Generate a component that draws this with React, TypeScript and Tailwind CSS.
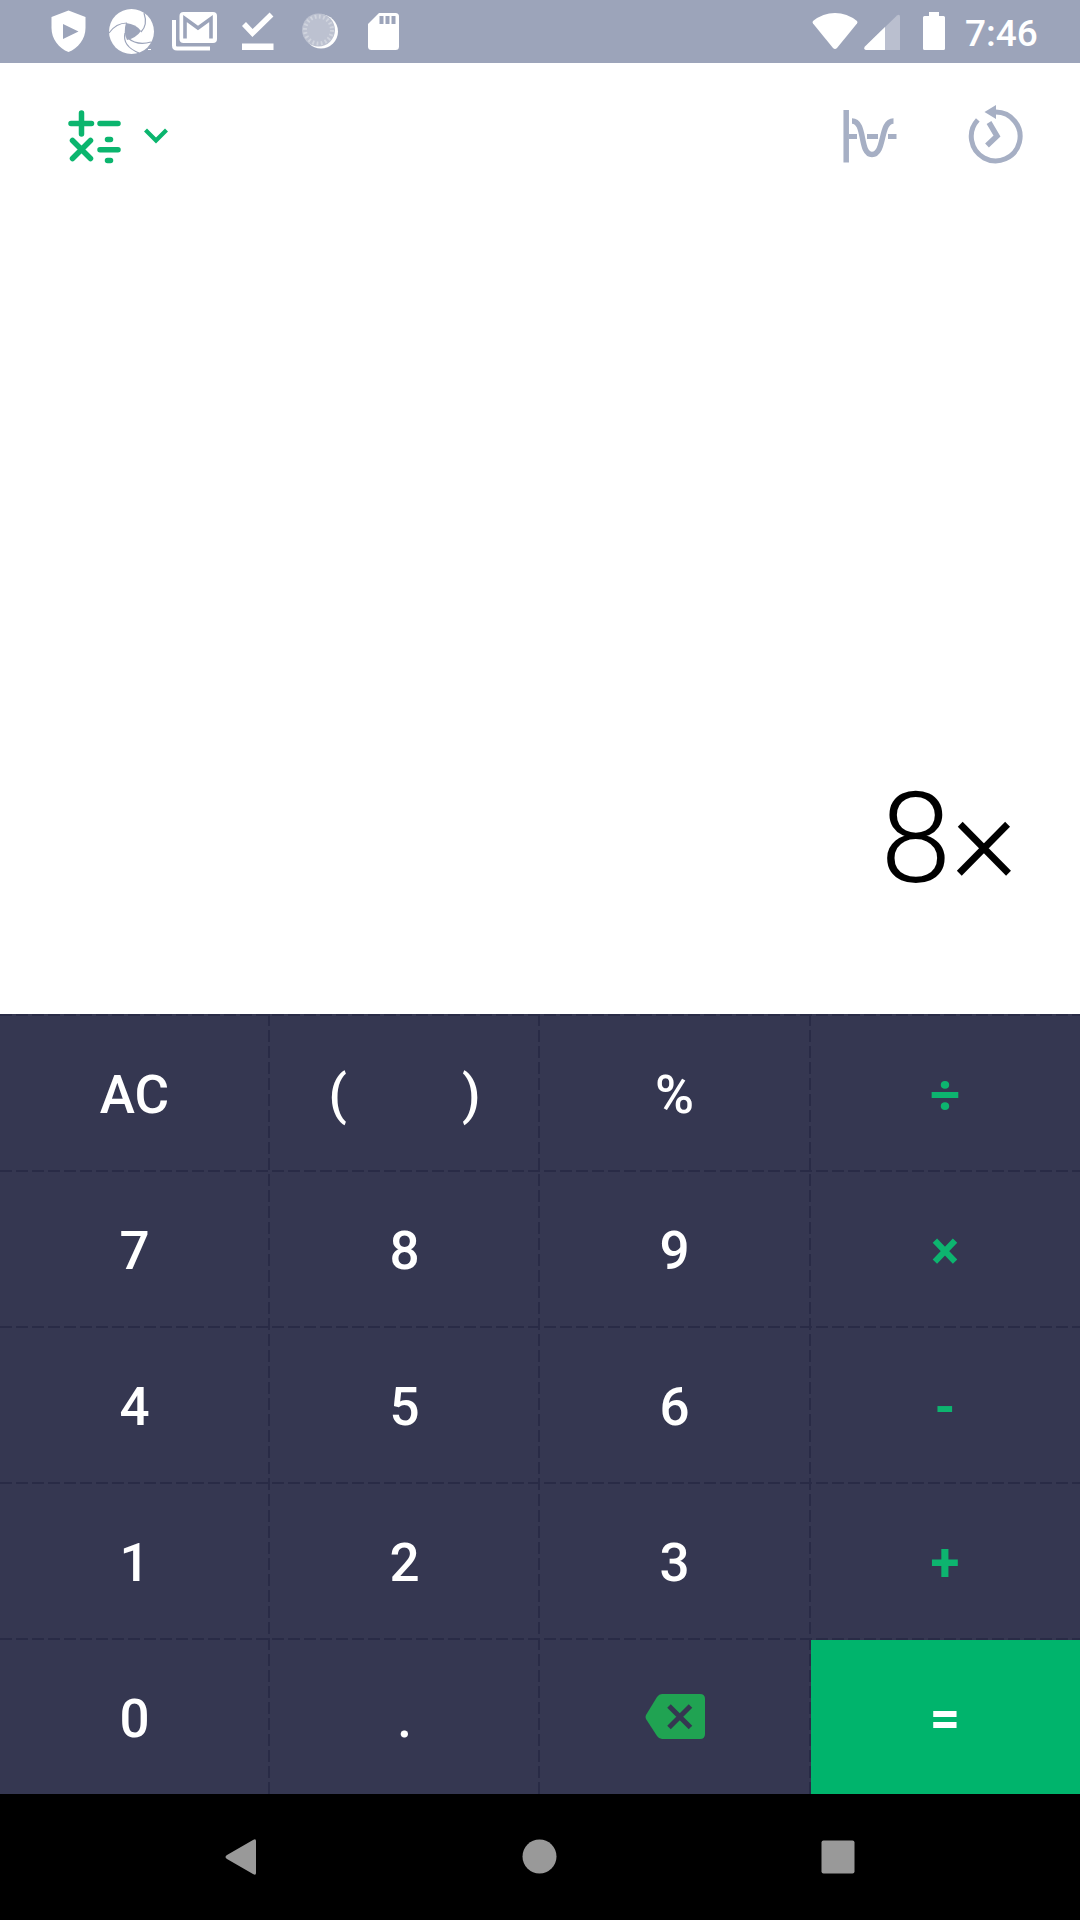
import React from "react";

const keys = ["AC", "()", "%", "÷", "7", "8", "9", "×", "4", "5", "6", "-", "1", "2", "3", "+", "0", ".", "del", "="];

function StatusBar() {
  return (
    <div className="flex h-[63px] w-full items-center justify-between bg-[#9ca4ba] text-white">
      <svg className="h-[63px] w-[420px]" viewBox="0 0 420 63" fill="currentColor">
        <path fillRule="evenodd" d="M68.500 10.500L85.500 17V28C85.500 39 78 48.500 68.500 52C59 48.500 51.500 39 51.500 28V17ZM63 24V39L78.500 31.500Z" />
        <circle cx="131.500" cy="31.500" r="22.500" />
        <path d="M126 23Q136 24 141 31Q136 38 127 40Q123 32 126 23Z" fill="#9ca4ba" />
        <path d="M109 33Q116 23 127 23M144 13Q148 25 141 32M151 42Q137 46 128 38M139 53Q122 46 125 33" fill="none" stroke="#9ca4ba" strokeWidth="1.200" />
        <path d="M148 49h3v1h-3z" />
        <path d="M174 20V45.500Q174 48.500 177 48.500H210" fill="none" stroke="currentColor" strokeWidth="4" />
        <rect x="179.500" y="12" width="37.500" height="31" rx="4" />
        <path d="M185 38.500V18.500L198 28L211 18.500V38.500" fill="none" stroke="#9ca4ba" strokeWidth="3.600" />
        <path d="M244 24L252.500 33L271.500 14.500" fill="none" stroke="currentColor" strokeWidth="5.500" />
        <rect x="242" y="43.500" width="31.500" height="6.500" />
        <circle cx="321" cy="31.500" r="17" />
        <circle cx="318.500" cy="30" r="16.500" fill="#bcc1d0" />
        <circle cx="318.500" cy="30" r="13.500" fill="none" stroke="#d0d4de" strokeWidth="4" strokeDasharray="1.800 2.441" />
        <path d="M379 13H395.500Q399 13 399 16.500V46.500Q399 50 395.500 50H371.500Q368 50 368 46.500V24Z" />
        <path d="M379.500 16h4v8h-4zM385.500 16h4v8h-4zM391.500 16h4v8h-4z" fill="#9ca4ba" />
      </svg>
      <div className="flex h-[63px] items-center pr-[41px]">
        <svg className="h-[63px] w-[152px]" viewBox="0 0 152 63" fill="currentColor">
          <path d="M1 21Q11 13 23 13Q35 13 45 21Q46 22 45 23.500L25 48Q23 50 21 48L1 23.500Q0 22 1 21Z" />
          <path d="M53 46.500L85 15.500Q88 13.500 88 17V50H54Q51 49 53 46.500Z" opacity=".3" />
          <path d="M53 46.500L73 27V50H54Q51 49 53 46.500Z" />
          <path d="M117 12h10v4h4.500q1.500 0 1.500 1.500V48.500q0 1.500-1.500 1.500h-19q-1.500 0-1.500-1.500V17.500q0-1.500 1.500-1.500H117z" />
        </svg>
        <span className="w-[75px] pt-[3px] pl-px font-['Roboto',sans-serif] text-[37px] leading-none font-medium">7:46</span>
      </div>
    </div>
  );
}

function Header() {
  return (
    <div className="flex h-[146px] items-center justify-between pr-[56px] pl-[66px]">
      <button className="flex items-center text-[#0bb56e]" aria-label="Calculator mode">
        <svg className="h-[60px] w-[106px]" viewBox="66 105.5 106 60" fill="none" stroke="currentColor" strokeWidth="5.500" strokeLinecap="round">
          <path d="M71 123H91.500M81.500 112.500V133.500M100 123H118M72.500 140L90.500 158M90.500 140L72.500 158M100 149.200H118M107.500 139H110.500M107.500 160H110.500" />
          <path d="M147 131L156 140L165 131" strokeWidth="4.200" strokeLinecap="square" />
        </svg>
      </button>
      <div className="flex items-center text-[#a6afc4]">
        <svg className="h-[64px] w-[184px]" viewBox="840 103.5 184 64" fill="none" stroke="currentColor">
          <path d="M846.200 109.500V162" strokeWidth="5.500" />
          <path d="M849 136H857M867 136H878M888 136H896.500" strokeWidth="5" />
          <path d="M852 120.500C866 120.500 859 154 872 154C885.500 154 879.500 120.500 893.500 120.500" strokeWidth="5.500" />
          <path d="M977.800 119.400A24.400 24.400 0 1 0 995.500 111.600" strokeWidth="5" />
          <path d="M996 104.500V118.500L984.500 111.500Z" fill="currentColor" stroke="none" />
          <path d="M989 122L997 135.500L987 145" strokeWidth="5.500" />
        </svg>
      </div>
    </div>
  );
}

function Key({ label, index }: { label: string; index: number }) {
  const operator = index % 4 === 3;
  const equals = label === "=";
  return (
    <button
      className={`flex items-center justify-center font-['Roboto',sans-serif] text-[53px] leading-none ${equals ? "mt-[2px] ml-px bg-[#00b46c] pt-[3px] pr-px font-bold text-white" : operator ? "pt-[7px] font-bold text-[#0db46f]" : "pt-[7px] pr-px font-medium text-white"}`}
    >
      {label === "()" ? (
        <span className="flex w-[152px] justify-between"><span>(</span><span>)</span></span>
      ) : label === "del" ? (
        <svg className="mb-[5px] h-[46px] w-[60px]" viewBox="0 0 60 46">
          <path d="M17 0H55Q60 0 60 5V40Q60 45 55 45H17Q14 45 12 42L1 25Q0 23 1 21L12 3Q14 0 17 0Z" fill="#20a352" />
          <path d="M24 12L45.500 33.500M45.500 12L24 33.500" stroke="#353751" strokeWidth="5" />
        </svg>
      ) : (
        <span>{label}</span>
      )}
    </button>
  );
}

function GridLines() {
  return (
    <svg className="pointer-events-none absolute inset-0 h-[780px] w-full" viewBox="0 0 1080 780" fill="none" stroke="#292b46" strokeWidth="2" strokeDasharray="12 4" aria-hidden="true">
      <path d="M0 1H1080M0 157H1080M0 313H1080M0 469H1080M0 625H1080M269 0V780M539 0V780M810 0V780" />
    </svg>
  );
}

export default function App() {
  return (
    <div className="flex h-[1920px] w-[1080px] flex-col overflow-hidden bg-white">
      <StatusBar />
      <Header />
      <div className="flex flex-1 items-end justify-end pr-[62.5px] pb-[112px]">
        <span className="font-['Roboto',sans-serif] text-[127px] leading-[127px] font-light text-black">8×</span>
      </div>
      <div className="relative grid h-[780px] grid-cols-4 grid-rows-5 bg-[#353751]">
        {keys.map((k, i) => <Key key={k} label={k} index={i} />)}
        <GridLines />
      </div>
      <div className="flex h-[126px] items-center bg-black">
        <svg className="h-[126px] w-full" viewBox="0 0 1080 126" fill="#999999">
          <path d="M253 46Q256 44 256 47V79Q256 82 253 80L227 65Q224 63 227 61Z" />
          <circle cx="539.500" cy="62.500" r="17" />
          <rect x="821.500" y="46.500" width="33" height="33" rx="2" />
        </svg>
      </div>
    </div>
  );
}
